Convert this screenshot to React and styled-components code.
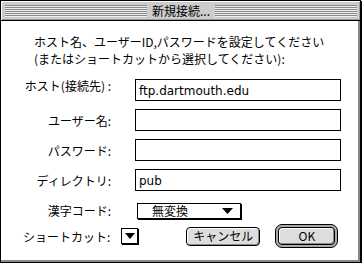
import React from 'react';
import styled, { createGlobalStyle } from 'styled-components';

const Global = createGlobalStyle`
  html, body { margin: 0; padding: 0; background: #fff; }
  body {
    font-family: "Noto Sans CJK JP", sans-serif;
    font-size: 12px;
    font-weight: 400;
    color: #000;
  }
`;

const Latin = styled.span`
  font-family: "DejaVu Sans", "Noto Sans CJK JP", sans-serif;
`;

const Window = styled.div`
  width: 361px;
  height: 263px;
  box-sizing: border-box;
  border: 1px solid #000;
  box-shadow: 1px 1px 0 #000;
  display: flex;
  flex-direction: column;
  background: #fff;
`;

const TitleBar = styled.div`
  height: 19px;
  background: #cccccc;
  box-shadow: inset 1px 1px 0 #fff, inset -1px -1px 0 #999;
  border-bottom: 1px solid #000;
  display: flex;
  align-items: center;
  padding: 0 3px 0 4px;
  flex-shrink: 0;
`;

const Stripes = styled.div`
  flex: 1;
  height: 12px;
  background: repeating-linear-gradient(to bottom, #888 0 1px, #eee 1px 2px);
`;

const Title = styled.div`
  padding: 0 5px;
  line-height: 14px;
  font-size: 12px;
`;

const Content = styled.div`
  flex: 1;
  box-shadow: inset -2px -2px 0 #888;
  padding-top: 12px;
  display: flex;
  flex-direction: column;
`;

const Message = styled.div`
  margin-left: 33px;
  line-height: 17px;
`;

const Form = styled.div`
  display: grid;
  grid-template-columns: 110px 206px;
  column-gap: 24px;
  row-gap: 8px;
  margin-top: 12px;
  align-items: center;
`;

const Label = styled.div`
  text-align: right;
  white-space: nowrap;
  margin-top: ${p => p.$mt || 0}px;
`;

const Field = styled.div`
  height: 22px;
  box-sizing: border-box;
  border: 1px solid #000;
  padding: 0 3px;
  line-height: 20px;
  font-size: 12px;
  overflow: hidden;
`;

const PopupRow = styled.div`
  display: contents;
`;

const Popup = styled.div`
  margin-top: 3px;
  margin-left: 2px;
  width: 104px;
  height: 16px;
  box-sizing: border-box;
  border: 1px solid #000;
  box-shadow: 1px 1px 0 #000;
  display: flex;
  align-items: center;
  padding: 0 7px 0 14px;
  line-height: 14px;
  justify-content: space-between;
`;

const Arrow = ({ w = 11, h = 6 }) => (
  <svg width={w} height={h} viewBox={`0 0 ${w} ${h}`}>
    <polygon points={`0,0 ${w},0 ${w / 2},${h}`} fill="#000" />
  </svg>
);

const BottomRow = styled.div`
  display: flex;
  align-items: center;
  height: 24px;
  margin-top: 5px;
  padding-left: 22px;
`;

const SmallPopup = styled.div`
  width: 17px;
  height: 16px;
  box-sizing: border-box;
  border: 1px solid #000;
  box-shadow: 1px 1px 0 #000;
  display: flex;
  align-items: center;
  justify-content: center;
  margin-left: ${p => p.$ml || 0}px;
`;

const Button = styled.div`
  width: 74px;
  height: 19px;
  box-sizing: border-box;
  border: 1px solid #000;
  border-radius: 4px;
  background: #dddddd;
  box-shadow: inset 1px 1px 0 #fff, inset -1px -1px 0 #888;
  display: flex;
  align-items: center;
  justify-content: center;
  line-height: 16px;
  margin-left: ${p => p.$ml || 0}px;
`;

const DefaultRing = styled.div`
  width: 63px;
  height: 24px;
  box-sizing: border-box;
  border: 1px solid #000;
  border-radius: 7px;
  background: #aaa;
  padding: 2px;
  margin-left: 15px;
  display: flex;
`;

const InnerButton = styled.div`
  flex: 1;
  box-sizing: border-box;
  border: 1px solid #000;
  border-radius: 4px;
  background: #dddddd;
  box-shadow: inset 1px 1px 0 #fff, inset -1px -1px 0 #888;
  display: flex;
  align-items: center;
  justify-content: center;
  line-height: 16px;
`;

export default function App() {
  return (
    <>
      <Global />
      <Window>
        <TitleBar>
          <Stripes />
          <Title>新規接続...</Title>
          <Stripes />
        </TitleBar>
        <Content>
          <Message>
            ホスト名、ユーザーID,パスワードを設定してください
            <br />
            (またはショートカットから選択してください):
          </Message>
          <Form>
            <Label $mt={-10}>ホスト(接続先) :</Label>
            <Field><Latin>ftp.dartmouth.edu</Latin></Field>
            <Label>ユーザー名:</Label>
            <Field />
            <Label>パスワード:</Label>
            <Field />
            <Label>ディレクトリ:</Label>
            <Field><Latin>pub</Latin></Field>
            <PopupRow>
              <Label $mt={3}>漢字コード:</Label>
              <Popup>
                <span>無変換</span>
                <Arrow />
              </Popup>
            </PopupRow>
          </Form>
          <BottomRow>
            <Label>ショートカット:</Label>
            <SmallPopup $ml={11}>
              <Arrow w={10} h={6} />
            </SmallPopup>
            <Button $ml={48}>キャンセル</Button>
            <DefaultRing>
              <InnerButton>OK</InnerButton>
            </DefaultRing>
          </BottomRow>
        </Content>
      </Window>
    </>
  );
}
